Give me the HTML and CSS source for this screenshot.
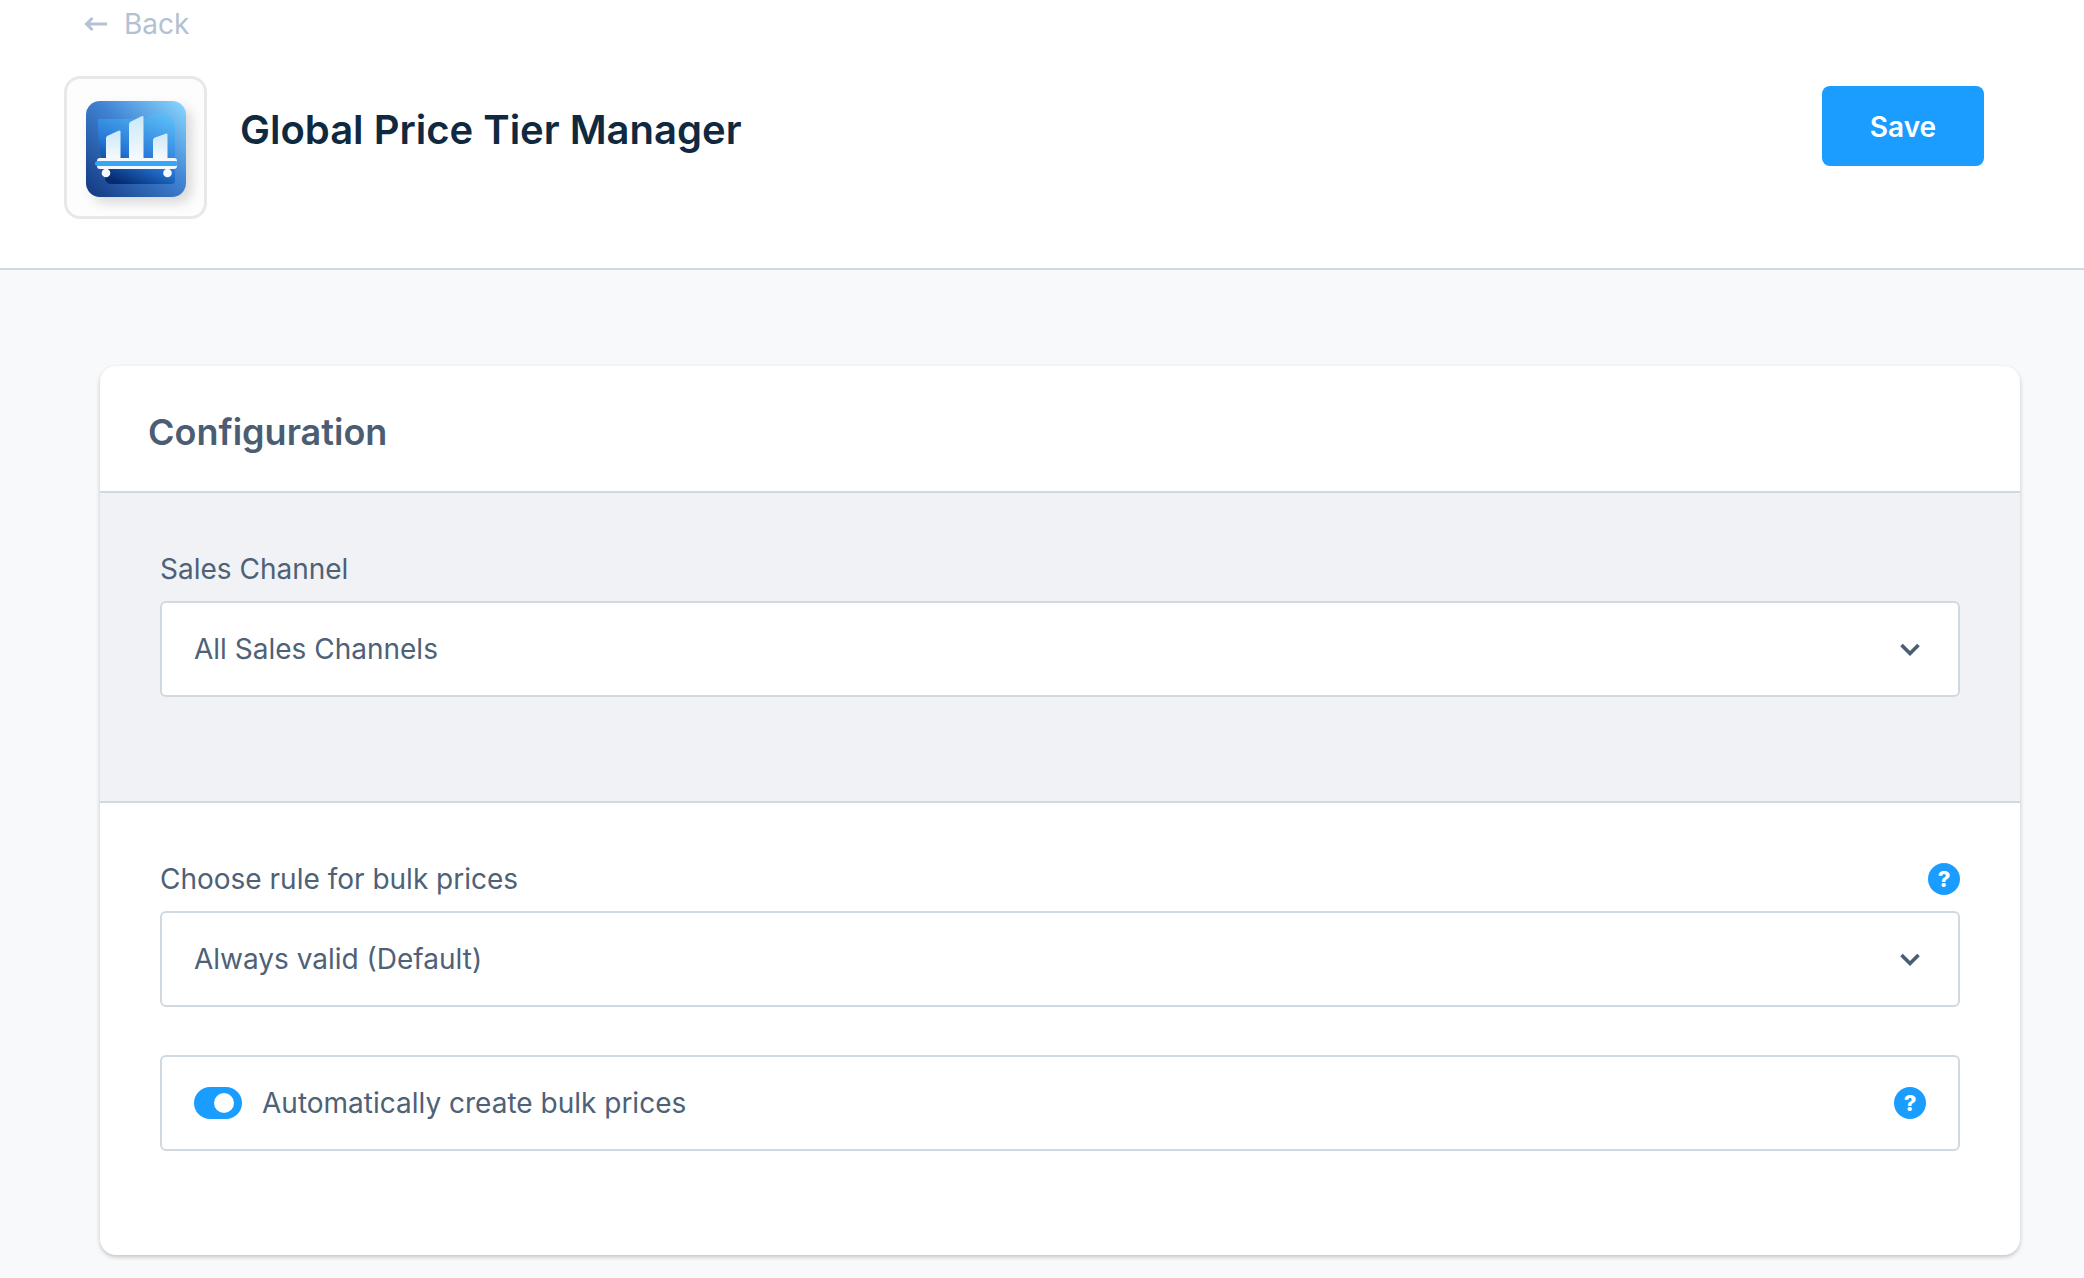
FILE: index.html

```html
<!DOCTYPE html>
<html lang="en">
<head>
    <meta charset="UTF-8">
    <title>Global Price Tier Manager</title>
    <link rel="stylesheet" href="styles.css">
</head>
<body>
    <header class="top-bar">
        <a class="back-link" href="#">
            <svg class="back-arrow" width="24" height="16" viewBox="0 0 24 16"><path d="M23 8H2.500M8.500 2L2.500 8l6 6" fill="none" stroke="#b3c1d3" stroke-width="3"/></svg>
            <span>Back</span>
        </a>
        <div class="title-row">
            <div class="app-title">
                <div class="logo-box">
                    <svg class="logo" width="100" height="97" viewBox="0 0 100 97">
                        <defs>
                            <linearGradient id="logoBg" x1="1" y1="0" x2="0" y2="1">
                                <stop offset="0" stop-color="#8ad9ff"/>
                                <stop offset="0.45" stop-color="#3f82d2"/>
                                <stop offset="1" stop-color="#12367f"/>
                            </linearGradient>
                            <linearGradient id="logoInner" x1="0.8" y1="0" x2="0.3" y2="1">
                                <stop offset="0" stop-color="#5abbf6"/>
                                <stop offset="0.6" stop-color="#2476d6"/>
                                <stop offset="1" stop-color="#062a70"/>
                            </linearGradient>
                            <linearGradient id="logoBar" x1="0" y1="0" x2="0" y2="1">
                                <stop offset="0" stop-color="#cbe8f9"/>
                                <stop offset="1" stop-color="#f6f9fb"/>
                            </linearGradient>
                        </defs>
                        <rect width="100" height="96" rx="14" fill="url(#logoBg)"/>
                        <path d="M12 18h48c4-4 8-5 12-5 7 0 17 2 17 14v52c0 3-1 4-4 4H26c-4 0-7-2-7-6V60c-6 0-7-30-7-42z" fill="url(#logoInner)"/>
                        <path d="M20 57V37q0-1.500 1.500-2.200l11-5q2-.8 2 1V57z" fill="url(#logoBar)"/>
                        <path d="M43 57V23q0-1.500 1.500-2.200l11-5.500q2-.8 2 1V57z" fill="url(#logoBar)"/>
                        <path d="M67 57V39q0-1.500 1.500-2.200l11-4q2-.8 2 1V57z" fill="url(#logoBar)"/>
                        <rect x="11" y="57" width="80" height="11" rx="3" fill="#f5f9fc"/>
                        <rect x="9" y="60" width="83" height="5" rx="2.500" fill="#36a6f8"/>
                        <circle cx="20" cy="72" r="4.300" fill="#f5f9fc"/>
                        <circle cx="81.500" cy="72" r="4.300" fill="#f5f9fc"/>
                    </svg>
                </div>
                <h1>Global Price Tier Manager</h1>
            </div>
            <button class="save-btn">Save</button>
        </div>
    </header>

    <main class="content">
        <section class="card">
            <h2 class="card-title">Configuration</h2>

            <div class="card-section shaded">
                <div class="field-label"><span>Sales Channel</span></div>
                <div class="select-box">
                    <span>All Sales Channels</span>
                    <svg class="chevron" width="20" height="13" viewBox="0 0 20 13"><path d="M1.500 2l8.500 8.500L18.500 2" fill="none" stroke="#4a5d73" stroke-width="3.600"/></svg>
                </div>
            </div>

            <div class="card-section">
                <div class="field-label">
                    <span>Choose rule for bulk prices</span>
                    <span class="help">?</span>
                </div>
                <div class="select-box">
                    <span>Always valid (Default)</span>
                    <svg class="chevron" width="20" height="13" viewBox="0 0 20 13"><path d="M1.500 2l8.500 8.500L18.500 2" fill="none" stroke="#4a5d73" stroke-width="3.600"/></svg>
                </div>
                <div class="toggle-box">
                    <span class="toggle"></span>
                    <span class="toggle-text">Automatically create bulk prices</span>
                    <span class="help">?</span>
                </div>
            </div>
        </section>
    </main>
</body>
</html>
```

FILE: styles.css

```css
* {
    box-sizing: border-box;
}
body {
    margin: 0;
    font-family: Inter, "Noto Sans", sans-serif;
    background-color: #f8f9fb;
    color: #4e6177;
}
.top-bar {
    height: 270px;
    background: #fff;
    border-bottom: 2px solid #d1d9e0;
    padding: 8px 100px 0 64px;
}
.back-link {
    display: flex;
    align-items: center;
    gap: 16px;
    height: 32px;
    margin-left: 20px;
    color: #b3c1d3;
    font-size: 28px;
    text-decoration: none;
}
.title-row {
    display: flex;
    justify-content: space-between;
    align-items: flex-start;
    margin-top: 36px;
}
.app-title {
    display: flex;
    align-items: flex-start;
    gap: 33px;
}
.logo-box {
    width: 143px;
    height: 143px;
    padding: 22px 0 0 19px;
    background: #fdfdfd;
    border: 3px solid #e8e8e8;
    border-radius: 16px;
}
.logo {
    display: block;
    filter: drop-shadow(6px 6px 6px rgba(0, 0, 0, 0.14));
}
h1 {
    margin: 29px 0 0;
    font-size: 40px;
    font-weight: 600;
    color: #0f2940;
}
.save-btn {
    width: 162px;
    height: 80px;
    margin-top: 10px;
    padding: 2px 0 0;
    background-color: #1a9dff;
    color: #fff;
    border: none;
    border-radius: 8px;
    font-family: inherit;
    font-size: 28px;
    font-weight: 600;
}
.content {
    padding: 96px 64px 20px 100px;
}
.card {
    background: #fff;
    border-radius: 16px;
    box-shadow: 0 2px 4px rgba(0, 0, 0, 0.22);
    overflow: hidden;
}
.card-title {
    margin: 0;
    height: 127px;
    padding: 44px 48px 0;
    font-size: 36px;
    font-weight: 600;
    line-height: 44px;
    color: #4a5d73;
    border-bottom: 2px solid #d1d9e0;
}
.card-section {
    padding: 60px 60px 104px;
}
.shaded {
    height: 310px;
    background: #f0f2f6;
    border-bottom: 2px solid #d1d9e0;
}
.field-label {
    display: flex;
    justify-content: space-between;
    align-items: center;
    height: 32px;
    margin-bottom: 16px;
    font-size: 28px;
}
.select-box, .toggle-box {
    display: flex;
    align-items: center;
    height: 96px;
    background: #fff;
    border: 2px solid #d1d9e0;
    border-radius: 6px;
    font-size: 28px;
}
.select-box {
    justify-content: space-between;
    padding: 0 38px 0 32px;
}
.toggle-box {
    margin-top: 48px;
    padding: 0 32px;
}
.toggle {
    position: relative;
    width: 48px;
    height: 32px;
    border-radius: 16px;
    background: #1a9dff;
}
.toggle::after {
    content: "";
    position: absolute;
    top: 6px;
    right: 8px;
    width: 20px;
    height: 20px;
    border-radius: 50%;
    background: #fff;
}
.toggle-text {
    flex: 1;
    margin-left: 20px;
}
.help {
    display: flex;
    justify-content: center;
    align-items: center;
    width: 32px;
    height: 32px;
    border-radius: 50%;
    background: #1a9dff;
    color: #fff;
    font-size: 22px;
    font-weight: 800;
}
```
